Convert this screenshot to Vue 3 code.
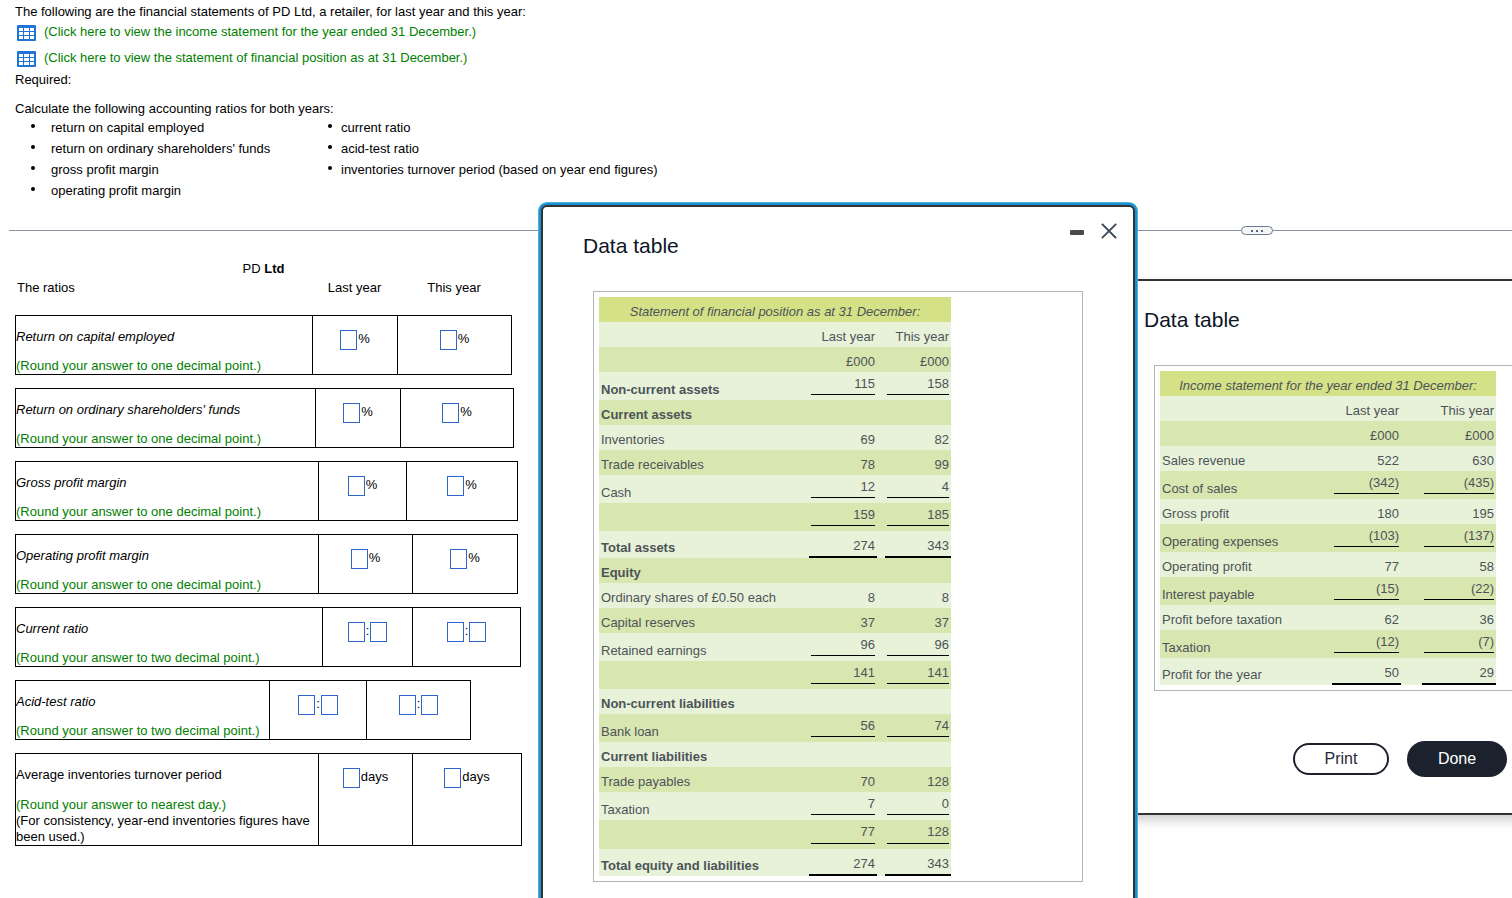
<script setup>
const links = [
  '(Click here to view the income statement for the year ended 31 December.)',
  '(Click here to view the statement of financial position as at 31 December.)'
]

const ratioLists = [
  ['return on capital employed', "return on ordinary shareholders' funds", 'gross profit margin', 'operating profit margin'],
  ['current ratio', 'acid-test ratio', 'inventories turnover period (based on year end figures)']
]

const years = ['Last year', 'This year']
const one = '(Round your answer to one decimal point.)'
const two = '(Round your answer to two decimal point.)'
const ratios = [
  { name: 'Return on capital employed', hint: one, unit: '%', cols: [297, 85, 114] },
  { name: "Return on ordinary shareholders' funds", hint: one, unit: '%', cols: [300, 85, 113] },
  { name: 'Gross profit margin', hint: one, unit: '%', cols: [303, 88, 111] },
  { name: 'Operating profit margin', hint: one, unit: '%', cols: [303, 94, 105] },
  { name: 'Current ratio', hint: two, unit: ':', cols: [307, 90, 108] },
  { name: 'Acid-test ratio', hint: two, unit: ':', cols: [254, 97, 104] },
  {
    name: 'Average inventories turnover period',
    hint: '(Round your answer to nearest day.)',
    note: '(For consistency, year-end inventories figures have been used.)',
    unit: 'days',
    plain: true,
    cols: [303, 94, 109]
  }
]

// Each row: label, last year, this year, style flags
// (b = bold, s = subtotal rule, l = last subtotal before the grand total, t = total rule)
const incomeRows = [
  ['', 'Last year', 'This year', ''],
  ['', '£000', '£000', ''],
  ['Sales revenue', '522', '630', ''],
  ['Cost of sales', '(342)', '(435)', 's'],
  ['Gross profit', '180', '195', ''],
  ['Operating expenses', '(103)', '(137)', 's'],
  ['Operating profit', '77', '58', ''],
  ['Interest payable', '(15)', '(22)', 's'],
  ['Profit before taxation', '62', '36', ''],
  ['Taxation', '(12)', '(7)', 's'],
  ['Profit for the year', '50', '29', 't']
]
const positionRows = [
  ['', 'Last year', 'This year', ''],
  ['', '£000', '£000', ''],
  ['Non-current assets', '115', '158', 'bs'],
  ['Current assets', '', '', 'b'],
  ['Inventories', '69', '82', ''],
  ['Trade receivables', '78', '99', ''],
  ['Cash', '12', '4', 's'],
  ['', '159', '185', 's'],
  ['Total assets', '274', '343', 'bt'],
  ['Equity', '', '', 'b'],
  ['Ordinary shares of £0.50 each', '8', '8', ''],
  ['Capital reserves', '37', '37', ''],
  ['Retained earnings', '96', '96', 's'],
  ['', '141', '141', 's'],
  ['Non-current liabilities', '', '', 'b'],
  ['Bank loan', '56', '74', 's'],
  ['Current liabilities', '', '', 'b'],
  ['Trade payables', '70', '128', ''],
  ['Taxation', '7', '0', 's'],
  ['', '77', '128', 'sl'],
  ['Total equity and liabilities', '274', '343', 'bt']
]
const dialogs = [
  { id: 'income', heading: 'Income statement for the year ended 31 December:', rows: incomeRows, cols: [172, 69, 21, 74], actions: true },
  { id: 'position', heading: 'Statement of financial position as at 31 December:', rows: positionRows, cols: [210, 68, 8, 66], controls: true }
]
const ruleClass = (flags) => ({
  sub: flags.includes('s'),
  last: flags.includes('l'),
  total: flags.includes('t')
})
</script>

<template>
  <main class="page">
    <section class="question">
      <p>The following are the financial statements of PD Ltd, a retailer, for last year and this year:</p>
      <a v-for="link in links" :key="link" class="doc-link" href="#">
        <svg class="grid-icon" width="19" height="16" viewBox="0 0 19 16" aria-hidden="true">
          <rect width="19" height="16" rx="1" fill="#1f74d8" />
          <g fill="#fff">
            <template v-for="y in [3, 7, 11]" :key="y">
              <rect x="2" :y="y" width="4" height="3" />
              <rect x="7" :y="y" width="5" height="3" />
              <rect x="13" :y="y" width="4" height="3" />
            </template>
          </g>
        </svg>
        <span>{{ link }}</span>
      </a>
      <p>Required:</p>
      <p class="task">Calculate the following accounting ratios for both years:</p>
      <div class="lists">
        <ul v-for="(list, i) in ratioLists" :key="i">
          <li v-for="item in list" :key="item">{{ item }}</li>
        </ul>
      </div>
    </section>

    <div class="divider">
      <span class="rule"></span>
      <button class="handle" type="button" aria-label="Resize panels"><i></i><i></i><i></i></button>
      <span class="rule end"></span>
    </div>

    <section class="answers">
      <h1>PD <b>Ltd</b></h1>
      <div class="heads">
        <span>The ratios</span>
        <span v-for="year in years" :key="year">{{ year }}</span>
      </div>
      <table v-for="ratio in ratios" :key="ratio.name" class="ratio">
        <colgroup>
          <col v-for="(w, i) in ratio.cols" :key="i" :style="{ width: w + 'px' }" />
        </colgroup>
        <tbody>
          <tr>
            <th scope="row">
              <span class="name" :class="{ plain: ratio.plain }">{{ ratio.name }}</span>
              <span class="hint">{{ ratio.hint }}</span>
              <span v-if="ratio.note" class="note">{{ ratio.note }}</span>
            </th>
            <td v-for="year in years" :key="year">
              <label class="answer">
                <input type="text" :aria-label="ratio.name + ', ' + year" />
                <span>{{ ratio.unit }}</span>
                <input v-if="ratio.unit === ':'" type="text" :aria-label="ratio.name + ' to, ' + year" />
              </label>
            </td>
          </tr>
        </tbody>
      </table>
    </section>

    <section
      v-for="d in dialogs"
      :key="d.id"
      class="dialog"
      :class="d.id"
      role="dialog"
      :aria-labelledby="d.id + '-title'"
    >
      <header>
        <h2 :id="d.id + '-title'">Data table</h2>
        <template v-if="d.controls">
          <button type="button" aria-label="Minimise">
            <svg width="24" height="24" viewBox="0 0 24 24"><rect x="5" y="11" width="14" height="5" rx="1" fill="#4a4a4c" /></svg>
          </button>
          <button type="button" aria-label="Close">
            <svg width="24" height="24" viewBox="0 0 24 24">
              <path d="M5.500 5.500l13 13M18.500 5.500l-13 13" fill="none" stroke="#3d4a5a" stroke-width="1.8" stroke-linecap="square" />
            </svg>
          </button>
        </template>
      </header>
      <div class="frame">
        <table class="sheet">
          <colgroup>
            <col v-for="(w, i) in d.cols" :key="i" :style="{ width: w + 'px' }" />
          </colgroup>
          <thead>
            <tr><th colspan="4">{{ d.heading }}</th></tr>
          </thead>
          <tbody>
            <tr v-for="(row, i) in d.rows" :key="i">
              <td class="label" :class="{ bold: row[3].includes('b') }">{{ row[0] }}</td>
              <td class="num" :class="ruleClass(row[3])"><div>{{ row[1] }}</div></td>
              <td></td>
              <td class="num" :class="ruleClass(row[3])"><div>{{ row[2] }}</div></td>
            </tr>
          </tbody>
        </table>
      </div>
      <footer v-if="d.actions">
        <button class="print" type="button">Print</button>
        <button class="done" type="button">Done</button>
      </footer>
    </section>
  </main>
</template>

<style>
body {
  margin: 0;
  background: #fff;
}
</style>

<style scoped>
.page {
  position: relative;
  box-sizing: border-box;
  min-height: 100vh;
  overflow: hidden;
  padding-top: 4px;
  font: 13px/16px "Liberation Sans", Arial, sans-serif;
  color: #000;
}
p, h1, h2, ul {
  margin: 0;
  padding: 0;
}
button {
  font-family: inherit;
  padding: 0;
  border: 0;
  background: none;
  cursor: pointer;
}
.question {
  padding-left: 15px;
}
.doc-link {
  display: flex;
  gap: 8px;
  width: fit-content;
  height: 26px;
  padding-left: 2px;
  line-height: 24px;
  color: #008000;
  text-decoration: none;
}
.grid-icon {
  margin-top: 5px;
}
.task {
  margin-top: 13px;
}
.lists {
  display: grid;
  grid-template-columns: 290px auto;
  justify-content: start;
  margin-top: 1px;
  padding-left: 36px;
}
.lists ul {
  list-style: none;
}
.lists li {
  position: relative;
  height: 21px;
  line-height: 20px;
}
.lists li::before {
  content: "";
  position: absolute;
  top: 6px;
  left: -20px;
  width: 4px;
  height: 4px;
  border-radius: 2px;
  background: #000;
}
.lists ul + ul li::before {
  left: -13px;
}
.divider {
  display: flex;
  align-items: center;
  margin: 24px 0 26px 9px;
}
.rule {
  flex: 31;
  height: 1px;
  background: #8791a3;
}
.rule.end {
  flex: 6;
}
.handle {
  display: flex;
  align-items: center;
  justify-content: center;
  gap: 3px;
  box-sizing: border-box;
  width: 32px;
  height: 9px;
  border: 1px solid #6b7a8f;
  border-radius: 5px;
  background: #f4f6f8;
}
.handle i {
  width: 2px;
  height: 2px;
  background: #5d6570;
}
.answers {
  padding: 0 0 20px 15px;
}
h1 {
  width: 497px;
  font-size: 13px;
  font-weight: 400;
  text-align: center;
}
.heads {
  display: grid;
  grid-template-columns: 297px 85px 114px;
  margin: 3px 0 19px;
  text-align: center;
}
.heads span:first-child {
  padding-left: 2px;
  text-align: left;
}
.ratio {
  table-layout: fixed;
  width: 0;
  margin-bottom: 13px;
  border: solid #000;
  border-width: 1px 0 0 1px;
  border-spacing: 0;
}
.ratio th,
.ratio td {
  box-sizing: border-box;
  padding: 13px 0 0;
  border: solid #000;
  border-width: 0 1px 1px 0;
  font-weight: 400;
  text-align: left;
  vertical-align: top;
}
.ratio td {
  padding-top: 14px;
}
.name,
.hint,
.note {
  display: block;
}
.name {
  margin-bottom: 13px;
  font-style: italic;
}
.name.plain {
  margin-bottom: 14px;
  font-style: normal;
}
.hint {
  color: #008000;
}
.answer {
  display: flex;
  align-items: center;
  justify-content: center;
  gap: 1px;
}
.answer span {
  padding-bottom: 2px;
}
.answer input {
  box-sizing: border-box;
  width: 17px;
  height: 20px;
  padding: 0;
  border: 1px solid #2f66cc;
  background: #fff;
  font: inherit;
}
.dialog {
  position: absolute;
  box-sizing: border-box;
  width: 594px;
  border: 2px solid #333;
  border-radius: 6px;
  background: #fff;
}
.income {
  top: 279px;
  left: 1102px;
  padding-bottom: 36px;
  box-shadow: 0 5px 12px rgba(0, 0, 0, 0.2);
}
.position {
  top: 205px;
  left: 541px;
  padding-bottom: 36px;
  box-shadow: 0 0 0 2px #1c90cf, 0 0 0 3px #4fb4e0;
}
.dialog header {
  display: flex;
  align-items: flex-start;
  gap: 8px;
  padding: 12px 12px 33px 40px;
}
.dialog h2 {
  flex: 1;
  margin-top: 15px;
  font-size: 21px;
  font-weight: 400;
  line-height: 24px;
  color: #0d1526;
}
.dialog header button,
.dialog header svg {
  display: block;
  width: 24px;
  height: 24px;
}
.frame {
  margin: 0 50px;
  padding: 5px;
  border: 1px solid #b5b5b5;
}
.sheet {
  table-layout: fixed;
  width: 0;
  border-spacing: 0;
  color: #4d5358;
}
.sheet th,
.sheet td {
  height: 16px;
  padding: 7px 2px 2px;
  vertical-align: bottom;
}
.sheet th {
  background: #d4e187;
  font-style: italic;
  font-weight: 400;
  text-align: center;
}
.sheet tr {
  background: #d8e6b0;
}
.sheet tbody tr:nth-child(odd) {
  background: #e7f2d8;
}
.label {
  white-space: nowrap;
}
.label.bold {
  font-weight: 700;
}
.num {
  text-align: right;
}
.sheet td.sub {
  padding: 4px 2px 5px;
}
.sub div {
  padding-bottom: 2px;
  border-bottom: 1px solid #000;
}
.sub.last div {
  padding-bottom: 3px;
}
.sheet td.total {
  padding: 7px 0 0;
}
.total div {
  padding: 0 2px 2px;
  border-bottom: 2px solid #000;
}
.dialog footer {
  display: flex;
  align-items: center;
  justify-content: center;
  gap: 18px;
  margin-top: 50px;
  padding-left: 2px;
}
.dialog footer button {
  box-sizing: border-box;
  border-radius: 18px;
  font-size: 16px;
}
.print {
  width: 96px;
  height: 32px;
  border: 2px solid #1c212d;
  color: #252a36;
}
.done {
  width: 100px;
  height: 36px;
  background: #1c222d;
  color: #fff;
}
</style>
